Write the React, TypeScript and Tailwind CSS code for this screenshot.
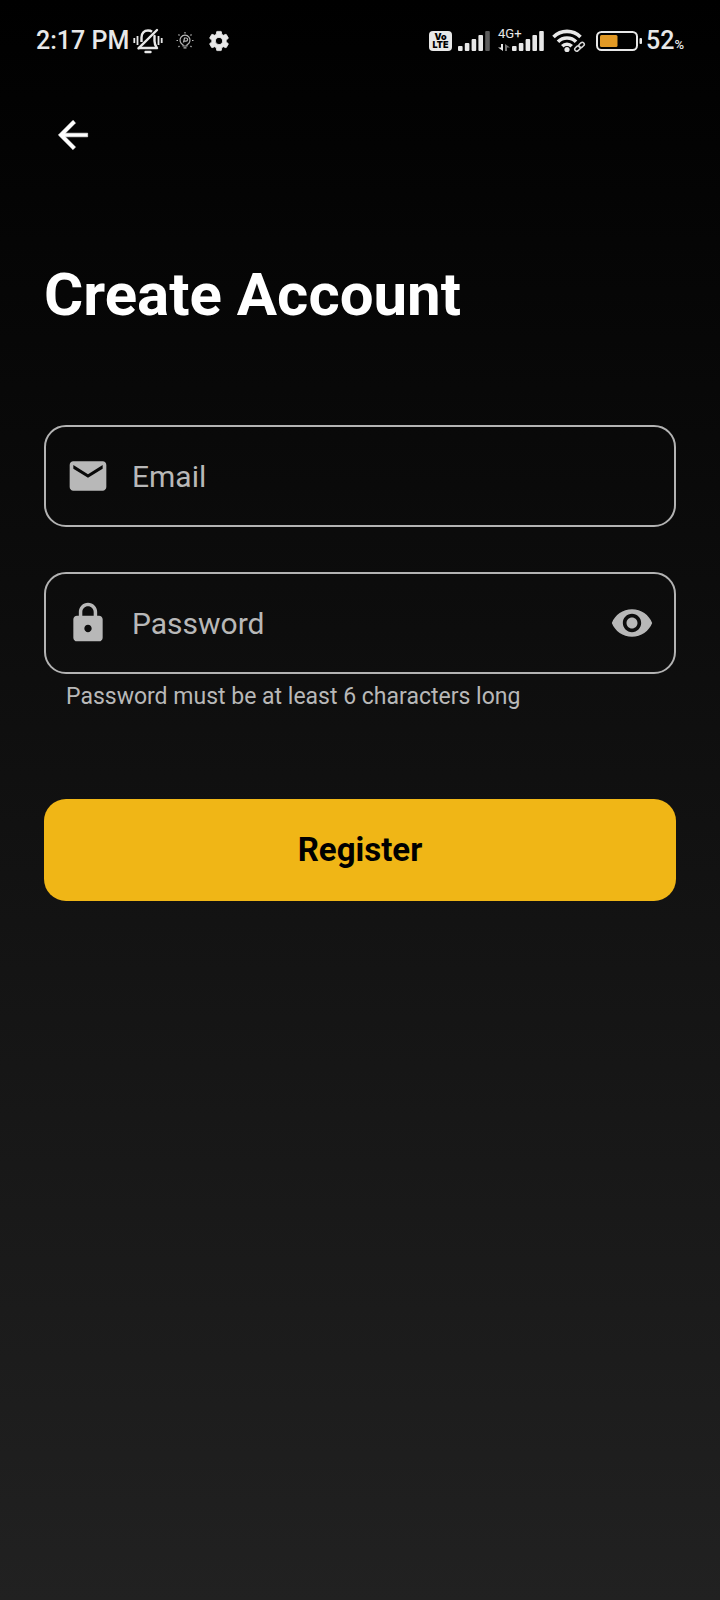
import { useState } from "react";

function MutedBell() {
  return (
    <svg viewBox="0 0 30 26" className="h-[26px] w-[30px]" fill="none" stroke="#e8e8e8" strokeWidth="2.400" aria-hidden="true">
      <path d="M8.500 14V9.500C8.500 5 11.200 2.500 15 2.500c1.800 0 3 .4 4 1.200" />
      <path d="M21.500 8v5c0 3 .8 5 2.500 7H6" strokeLinejoin="round" strokeLinecap="round" />
      <path d="M12.500 24h5" strokeWidth="2.400" strokeLinecap="round" />
      <path d="M1.300 10v5M4.500 8v9M25.500 8v9M28.700 10v5" strokeWidth="1.800" />
      <path d="M24 2 5.500 20.300" strokeWidth="2.400" strokeLinecap="round" />
    </svg>
  );
}

function Bulb() {
  return (
    <svg viewBox="0 0 20 20" className="h-5 w-5" fill="none" stroke="#b8b8b8" strokeWidth="1.200" aria-hidden="true">
      <path d="M8 15v-1.200a5 5 0 1 1 4 0V15zM8.500 16.800h3" />
      <path d="M8.500 11.500 9.500 7H11a1.500 1.500 0 0 1 0 3.200H9" />
      <path d="M10 1v1.500M1.500 9.500H3M17 9.500h1.500M3.500 3.500l1 1M16.500 3.500l-1 1M3.500 16l1-1M16.500 16l-1-1" />
    </svg>
  );
}

function Gear() {
  return (
    <svg viewBox="0 0 24 24" className="h-6 w-6" fill="#e8e8e8" stroke="#e8e8e8" strokeWidth="0.8" strokeLinejoin="round" aria-hidden="true">
      <path d="M19.140 12.940c.04-.3.060-.61.060-.94 0-.32-.02-.64-.07-.94l2.030-1.580a.49.490 0 0 0 .12-.61l-1.920-3.320a.488.488 0 0 0-.59-.22l-2.390.96c-.5-.38-1.030-.7-1.620-.94l-.36-2.540a.484.484 0 0 0-.48-.41h-3.840c-.24 0-.43.170-.47.410l-.36 2.540c-.59.240-1.130.57-1.620.94l-2.390-.96c-.22-.08-.47 0-.59.220L2.740 8.870c-.12.210-.08.470.12.610l2.030 1.580c-.05.300-.09.630-.09.940s.020.640.070.940l-2.030 1.580a.49.490 0 0 0-.12.610l1.920 3.320c.12.220.37.290.59.220l2.390-.96c.5.380 1.030.700 1.620.94l.36 2.540c.05.240.24.410.48.410h3.840c.24 0 .44-.17.470-.41l.36-2.540c.59-.24 1.130-.56 1.620-.94l2.390.96c.22.080.47 0 .59-.22l1.920-3.320c.12-.22.070-.47-.12-.61l-2.010-1.580zM12 15.600A3.610 3.610 0 0 1 8.400 12c0-1.980 1.620-3.600 3.600-3.600s3.600 1.620 3.600 3.600-1.620 3.600-3.600 3.600z" />
    </svg>
  );
}

function Signal() {
  return (
    <svg viewBox="0 0 32 20" className="h-5 w-8" fill="#e8e8e8" aria-hidden="true">
      <rect x="0" y="15" width="4.600" height="5" rx="1" />
      <rect x="6.800" y="12" width="4.600" height="8" rx="1" />
      <rect x="13.600" y="8" width="4.600" height="12" rx="1" />
      <rect x="20.400" y="4" width="4.600" height="16" rx="1" />
      <rect x="27.200" y="0" width="4.600" height="20" rx="1" fill="#5c5c5c" />
    </svg>
  );
}

function DataSignal() {
  return (
    <svg viewBox="0 0 46 20" className="h-5 w-[46px]" fill="#e8e8e8" aria-hidden="true">
      <path d="M3 13h2v7L0 16.500h3z" />
      <path d="M7 20h2v-3.500h3L7 13z" fill="#777" />
      <rect x="14" y="15" width="4.600" height="5" rx="1" />
      <rect x="20.800" y="12" width="4.600" height="8" rx="1" />
      <rect x="27.600" y="8" width="4.600" height="12" rx="1" />
      <rect x="34.400" y="4" width="4.600" height="16" rx="1" />
      <rect x="41.200" y="0" width="4.600" height="20" rx="1" />
    </svg>
  );
}

function Wifi() {
  return (
    <svg viewBox="0 0 34 24" className="h-6 w-[34px]" fill="none" stroke="#e8e8e8" strokeWidth="3.600" aria-hidden="true">
      <path d="M1.500 8a19 19 0 0 1 27 0" />
      <path d="M6 12.800a12.500 12.500 0 0 1 18 0" />
      <path d="M10.300 17.300a6.500 6.500 0 0 1 9.400 0" />
      <circle cx="15" cy="20.500" r="2.600" fill="#e8e8e8" stroke="none" />
      <g stroke="#000" strokeWidth="6">
        <path d="m25 20.500 5-4" />
      </g>
      <g strokeWidth="1.500" stroke="#d8d8d8">
        <rect x="22.500" y="17.500" width="6" height="4" rx="2" transform="rotate(-42 25.500 19.500)" />
        <rect x="26.500" y="14" width="6" height="4" rx="2" transform="rotate(-42 29.500 16)" />
      </g>
    </svg>
  );
}

function Battery() {
  return (
    <svg viewBox="0 0 46 20" className="h-5 w-[46px]" aria-hidden="true">
      <rect x="1" y="1" width="40" height="18" rx="4.500" fill="none" stroke="#e8e8e8" strokeWidth="2" />
      <rect x="4" y="4" width="17.500" height="12" rx="1.500" fill="#e39a25" />
      <rect x="43.500" y="7" width="2.500" height="6" rx="1" fill="#e8e8e8" />
    </svg>
  );
}

function StatusBar() {
  return (
    <div className="flex h-[82px] items-center justify-between px-9 text-[#e8e8e8]">
      <div className="flex items-center">
        <span className="text-[25px] font-medium">2:17 PM</span>
        <span className="ml-1"><MutedBell /></span>
        <span className="ml-3"><Bulb /></span>
        <span className="ml-3"><Gear /></span>
      </div>
      <div className="flex items-center">
        <div className="flex h-5 w-[23px] flex-col items-center justify-center rounded bg-[#e8e8e8] font-['Inter',sans-serif] text-[9px] leading-[8px] font-black text-black">
          <span>Vo</span>
          <span>LTE</span>
        </div>
        <span className="ml-1.5"><Signal /></span>
        <div className="relative ml-2">
          <DataSignal />
          <span className="absolute -top-1 left-0 text-[13px] leading-[13px]">4G+</span>
        </div>
        <span className="ml-2"><Wifi /></span>
        <span className="ml-2.5"><Battery /></span>
        <span className="ml-1 flex items-baseline font-medium">
          <span className="text-[25px]">52</span>
          <span className="text-[13px]">%</span>
        </span>
      </div>
    </div>
  );
}

const fieldBox = "flex h-[102px] items-center rounded-[22px] border-2 border-[#b3b3b3] px-5";
const fieldInput = "ml-[22px] min-w-0 flex-1 bg-transparent text-[30px] text-[#b8b8b8] outline-none placeholder:text-[#b8b8b8]";

export default function App() {
  const [visible, setVisible] = useState(false);
  return (
    <div className="min-h-screen bg-linear-to-b/srgb from-black to-[#212121] font-['Roboto',sans-serif]">
      <StatusBar />
      <header className="flex h-[106px] items-center px-[51px]">
        <button type="button" aria-label="Back" className="flex h-11 w-11 items-center justify-center">
          <svg viewBox="0 0 24 24" className="h-11 w-11" fill="#fff" stroke="#fff" strokeWidth="0.3" aria-hidden="true">
            <path d="M20 11H7.830l5.590-5.590L12 4l-8 8 8 8 1.410-1.410L7.830 13H20v-2z" />
          </svg>
        </button>
      </header>
      <main className="px-11 pt-[72px]">
        <h1 className="text-[60px] leading-[70px] font-bold text-white">Create Account</h1>
        <form className="mt-[95px]" onSubmit={(e) => e.preventDefault()}>
          <div className={fieldBox}>
            <label htmlFor="email" aria-label="Email">
              <svg viewBox="0 0 24 24" className="h-11 w-11" fill="#b8b8b8" aria-hidden="true">
                <path d="M20 4H4c-1.100 0-1.990.9-1.990 2L2 18c0 1.100.9 2 2 2h16c1.100 0 2-.9 2-2V6c0-1.100-.9-2-2-2zm0 4-8 5-8-5V6l8 5 8-5v2z" />
              </svg>
            </label>
            <input id="email" type="email" placeholder="Email" className={fieldInput} />
          </div>
          <div className={`${fieldBox} mt-[45px]`}>
            <label htmlFor="password" aria-label="Password">
              <svg viewBox="0 0 24 24" className="h-11 w-11" fill="#b8b8b8" aria-hidden="true">
                <path d="M18 8h-1V6c0-2.760-2.240-5-5-5S7 3.240 7 6v2H6c-1.100 0-2 .9-2 2v10c0 1.100.9 2 2 2h12c1.100 0 2-.9 2-2V10c0-1.100-.9-2-2-2zm-6 9c-1.100 0-2-.9-2-2s.9-2 2-2 2 .9 2 2-.9 2-2 2zm3.100-9H8.900V6c0-1.710 1.390-3.100 3.100-3.100s3.100 1.390 3.100 3.100v2z" />
              </svg>
            </label>
            <input
              id="password"
              type={visible ? "text" : "password"}
              placeholder="Password"
              aria-describedby="password-hint"
              className={fieldInput}
            />
            <button type="button" aria-label="Show password" onClick={() => setVisible(!visible)}>
              <svg viewBox="0 0 24 24" className="h-11 w-11" fill="#b8b8b8" aria-hidden="true">
                <path d="M12 4.500C7 4.500 2.730 7.610 1 12c1.730 4.390 6 7.500 11 7.500s9.270-3.110 11-7.500c-1.730-4.390-6-7.500-11-7.500zM12 17c-2.760 0-5-2.240-5-5s2.240-5 5-5 5 2.240 5 5-2.240 5-5 5zm0-8c-1.660 0-3 1.340-3 3s1.340 3 3 3 3-1.340 3-3-1.340-3-3-3z" />
              </svg>
            </button>
          </div>
          <p id="password-hint" className="mt-2 px-[22px] text-[23px] leading-[30px] text-[#b8b8b8]">
            Password must be at least 6 characters long
          </p>
          <button type="submit" className="mt-[87px] h-[102px] w-full rounded-[22px] bg-[#f0b616] text-[33px] font-bold text-black">
            Register
          </button>
        </form>
      </main>
    </div>
  );
}
